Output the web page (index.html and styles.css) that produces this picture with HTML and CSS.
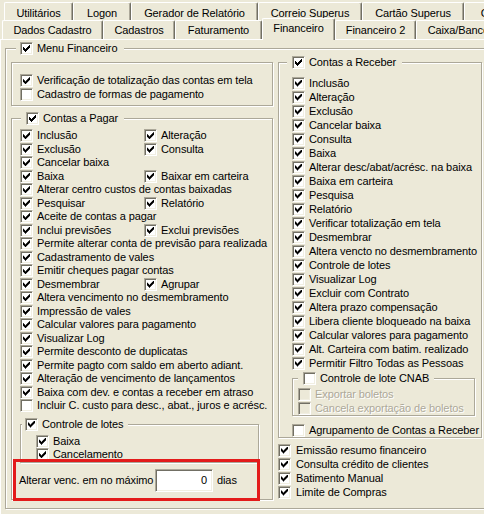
FILE: index.html
```html
<!DOCTYPE html>
<html lang="pt">
<head>
<meta charset="utf-8">
<title>Financeiro</title>
<link rel="stylesheet" href="styles.css">
</head>
<body>
<div class="tabs">
  <div class="trow r1">
    <div class="tab w69">Utilitários</div>
    <div class="tab w58">Logon</div>
    <div class="tab w127">Gerador de Relatório</div>
    <div class="tab w104">Correio Superus</div>
    <div class="tab w102">Cartão Superus</div>
    <div class="tab w60">Geral</div>
  </div>
  <div class="trow r2">
    <div class="tab w101">Dados Cadastro</div>
    <div class="tab w72">Cadastros</div>
    <div class="tab w87">Faturamento</div>
    <div class="tab w73 sel">Financeiro</div>
    <div class="tab w81">Financeiro 2</div>
    <div class="tab w90">Caixa/Bancos</div>
  </div>
</div>
<div class="page">
  <fieldset class="grp menu">
    <legend class="lg"><span class="cb on"></span>Menu Financeiro</legend>
    <div class="cols">
      <div class="left">
        <div class="box sub1">
          <div class="rw"><span class="cb on"></span>Verificação de totalização das contas em tela</div>
          <div class="rw"><span class="cb"></span>Cadastro de formas de pagamento</div>
        </div>
        <fieldset class="grp pagar">
          <legend class="lg"><span class="cb on"></span>Contas a Pagar</legend>
          <div class="rows">
            <div class="rw"><span class="it c1"><span class="cb on"></span>Inclusão</span><span class="it"><span class="cb on"></span>Alteração</span></div>
            <div class="rw"><span class="it c1"><span class="cb on"></span>Exclusão</span><span class="it"><span class="cb on"></span>Consulta</span></div>
            <div class="rw"><span class="cb on"></span>Cancelar baixa</div>
            <div class="rw"><span class="it c1"><span class="cb on"></span>Baixa</span><span class="it"><span class="cb on"></span>Baixar em carteira</span></div>
            <div class="rw"><span class="cb on"></span>Alterar centro custos de contas baixadas</div>
            <div class="rw"><span class="it c1"><span class="cb on"></span>Pesquisar</span><span class="it"><span class="cb on"></span>Relatório</span></div>
            <div class="rw"><span class="cb on"></span>Aceite de contas a pagar</div>
            <div class="rw"><span class="it c1"><span class="cb on"></span>Inclui previsões</span><span class="it"><span class="cb on"></span>Exclui previsões</span></div>
            <div class="rw"><span class="cb on"></span>Permite alterar conta de previsão para realizada</div>
            <div class="rw"><span class="cb on"></span>Cadastramento de vales</div>
            <div class="rw"><span class="cb on"></span>Emitir cheques pagar contas</div>
            <div class="rw"><span class="it c1"><span class="cb on"></span>Desmembrar</span><span class="it"><span class="cb on"></span>Agrupar</span></div>
            <div class="rw"><span class="cb on"></span>Altera vencimento no desmembramento</div>
            <div class="rw"><span class="cb on"></span>Impressão de vales</div>
            <div class="rw"><span class="cb on"></span>Calcular valores para pagamento</div>
            <div class="rw"><span class="cb on"></span>Visualizar Log</div>
            <div class="rw"><span class="cb on"></span>Permite desconto de duplicatas</div>
            <div class="rw"><span class="cb on"></span>Permite pagto com saldo em aberto adiant.</div>
            <div class="rw"><span class="cb on"></span>Alteração de vencimento de lançamentos</div>
            <div class="rw"><span class="cb on"></span>Baixa com dev. e contas a receber em atraso</div>
            <div class="rw"><span class="cb"></span>Incluir C. custo para desc., abat., juros e acrésc.</div>
          </div>
          <fieldset class="grp lotes">
            <legend class="lg"><span class="cb on"></span>Controle de lotes</legend>
            <div class="rows">
              <div class="rw"><span class="cb on"></span>Baixa</div>
              <div class="rw"><span class="cb on"></span>Cancelamento</div>
            </div>
          </fieldset>
          <div class="venc">
            <span class="vlabel">Alterar venc. em no máximo</span>
            <span class="num">0</span>
            <span class="dias">dias</span>
          </div>
        </fieldset>
      </div>
      <div class="right">
        <fieldset class="grp receber">
          <legend class="lg"><span class="cb on"></span>Contas a Receber</legend>
          <div class="rows">
            <div class="rw"><span class="cb on"></span>Inclusão</div>
            <div class="rw"><span class="cb on"></span>Alteração</div>
            <div class="rw"><span class="cb on"></span>Exclusão</div>
            <div class="rw"><span class="cb on"></span>Cancelar baixa</div>
            <div class="rw"><span class="cb on"></span>Consulta</div>
            <div class="rw"><span class="cb on"></span>Baixa</div>
            <div class="rw"><span class="cb on"></span>Alterar desc/abat/acrésc. na baixa</div>
            <div class="rw"><span class="cb on"></span>Baixa em carteira</div>
            <div class="rw"><span class="cb on"></span>Pesquisa</div>
            <div class="rw"><span class="cb on"></span>Relatório</div>
            <div class="rw"><span class="cb on"></span>Verificar totalização em tela</div>
            <div class="rw"><span class="cb on"></span>Desmembrar</div>
            <div class="rw"><span class="cb on"></span>Altera vencto no desmembramento</div>
            <div class="rw"><span class="cb on"></span>Controle de lotes</div>
            <div class="rw"><span class="cb on"></span>Visualizar Log</div>
            <div class="rw"><span class="cb on"></span>Excluir com Contrato</div>
            <div class="rw"><span class="cb on"></span>Altera prazo compensação</div>
            <div class="rw"><span class="cb on"></span>Libera cliente bloqueado na baixa</div>
            <div class="rw"><span class="cb on"></span>Calcular valores para pagamento</div>
            <div class="rw"><span class="cb on"></span>Alt. Carteira com batim. realizado</div>
            <div class="rw"><span class="cb on"></span>Permitir Filtro Todas as Pessoas</div>
          </div>
          <fieldset class="grp cnab">
            <legend class="lg"><span class="cb"></span>Controle de lote CNAB</legend>
            <div class="rows">
              <div class="rw dis"><span class="cb"></span>Exportar boletos</div>
              <div class="rw dis"><span class="cb"></span>Cancela exportação de boletos</div>
            </div>
          </fieldset>
          <div class="rw agrup"><span class="cb"></span>Agrupamento de Contas a Receber</div>
        </fieldset>
        <div class="extra">
          <div class="rw"><span class="cb on"></span>Emissão resumo financeiro</div>
          <div class="rw"><span class="cb on"></span>Consulta crédito de clientes</div>
          <div class="rw"><span class="cb on"></span>Batimento Manual</div>
          <div class="rw"><span class="cb on"></span>Limite de Compras</div>
        </div>
      </div>
    </div>
  </fieldset>
</div>
</body>
</html>
```

FILE: styles.css
```css
* { box-sizing: border-box; }
html, body { margin: 0; padding: 0; }
body {
  width: 484px;
  height: 514px;
  overflow: hidden;
  background: #ECE9D8;
  font-family: "Liberation Sans", Arial, sans-serif;
  font-size: 11px;
  line-height: 13px;
  letter-spacing: -0.1px;
  color: #000;
}

/* ---------- tabs ---------- */
.tabs { height: 39px; padding-top: 2px; }
.trow { display: flex; white-space: nowrap; }
.r1 { height: 18px; padding-left: 4px; }
.r2 { height: 19px; padding-left: 2px; }
.tab {
  flex: none;
  text-align: center;
  background: #ECE9D8;
  border-top: 1px solid #fff;
  border-left: 1px solid #fff;
  border-right: 1px solid #716F64;
  box-shadow: inset -1px 0 #ACA899;
  border-radius: 2px 2px 0 0;
  overflow: hidden;
}
.r1 .tab { height: 18px; padding-top: 4px; }
.r2 .tab { height: 19px; padding-top: 3px; }
.r2 .tab.sel {
  height: 22px;
  margin-top: -2px;
  padding-top: 3px;
  position: relative;
  z-index: 2;
}
.w58 { width: 58px; } .w60 { width: 60px; } .w69 { width: 69px; }
.w72 { width: 72px; } .w73 { width: 73px; } .w90 { width: 90px; }
.w81 { width: 81px; } .w87 { width: 87px; } .w101 { width: 101px; }
.w102 { width: 102px; } .w104 { width: 104px; } .w127 { width: 127px; }

/* ---------- page ---------- */
.page {
  height: 475px;
  border-top: 1px solid #fff;
  border-left: 1px solid #fff;
  padding: 2px 0 0 4px;
}

/* group boxes */
.grp {
  margin: 0;
  padding: 0;
  min-width: 0;
  border: 1px solid #ACA899;
  box-shadow: inset 1px 1px #fff, 1px 1px #fff;
}
.box {
  border: 1px solid #ACA899;
  box-shadow: inset 1px 1px #fff, 1px 1px #fff;
}
.lg {
  display: flex;
  align-items: center;
  height: 13px;
  padding: 0 6px 0 5px;
  background: #ECE9D8;
  white-space: nowrap;
}

/* checkbox */
.cb {
  flex: none;
  width: 13px;
  height: 13px;
  margin-right: 4px;
  padding: 2px;
  background: #fff;
  border: 1px solid;
  border-color: #ACA899 #fff #fff #ACA899;
  box-shadow: inset 1px 1px #716F64, inset -1px -1px #F1EFE2;
}
.cb.on::after {
  content: "";
  display: block;
  width: 7px;
  height: 7px;
  background: #000;
  clip-path: polygon(0 2px, 1px 2px, 1px 3px, 2px 3px, 2px 4px, 3px 4px, 3px 3px, 4px 3px, 4px 2px, 5px 2px, 5px 1px, 6px 1px, 6px 0, 7px 0, 7px 3px, 6px 3px, 6px 4px, 5px 4px, 5px 5px, 4px 5px, 4px 6px, 3px 6px, 3px 7px, 2px 7px, 2px 6px, 1px 6px, 1px 5px, 0 5px);
}
.rw.dis { color: #ACA899; text-shadow: 1px 1px #fff; }
.rw.dis .cb { background: #ECE9D8; }

.rw {
  display: flex;
  align-items: center;
  height: 13.5px;
  white-space: nowrap;
}
.it { display: flex; align-items: center; }
.it.c1 { width: 124px; }

/* Menu Financeiro */
.menu { width: 500px; }
.menu > .lg { margin-left: 10px; padding: 0 7px 0 4px; }
.cols {
  display: flex;
  align-items: flex-start;
  padding: 0 0 8px 5px;
}
.left { flex: none; width: 262px; margin: 7px 5px 0 0; }
.right { flex: none; width: 204px; margin-top: 1px; }

.sub1 { padding: 11px 0 4px 8px; }

/* Contas a Pagar */
.pagar { margin-top: 6px; }
.pagar > .lg { margin-left: 9px; }
.pagar > .rows { padding: 4px 0 0 8px; }

.lotes { margin: 5px 0 0 8px; width: 239px; }
.lotes > .lg { margin-left: 1px; padding: 0 5px 0 3px; }
.lotes > .rows { padding: 4px 0 0 15px; }

.venc {
  position: relative;
  z-index: 1;
  display: flex;
  align-items: center;
  width: 247px;
  height: 42px;
  margin: -3.5px 0 -2px 1px;
  padding: 1px 0 0 3px;
  border: 3px solid #E31B1B;
}
.vlabel { flex: none; width: 136px; }
.num {
  flex: none;
  width: 58px;
  height: 23px;
  padding: 4px 5px 0 0;
  text-align: right;
  background: #fff;
  border: 1px solid;
  border-color: #ACA899 #fff #fff #ACA899;
  box-shadow: inset 1px 1px #716F64, inset -1px -1px #F1EFE2;
}
.dias { margin-left: 4px; }

/* Contas a Receber */
.receber { width: 204px; }
.receber > .lg { margin-left: 8px; }
.receber > .rows { padding: 7px 0 0 13px; }
.receber > .rows .rw { height: 14px; }

.cnab { margin: 2px 0 0 13px; width: 183px; }
.cnab > .lg { margin-left: 5px; padding: 0 5px; }
.cnab > .rows { padding: 3px 0 0 5px; }

.agrup { margin-top: 7px; padding-left: 13px; height: 14px; }

.extra { margin-top: 5px; }
.extra .rw { height: 14px; }
.extra .cb { margin-right: 5px; }
```
